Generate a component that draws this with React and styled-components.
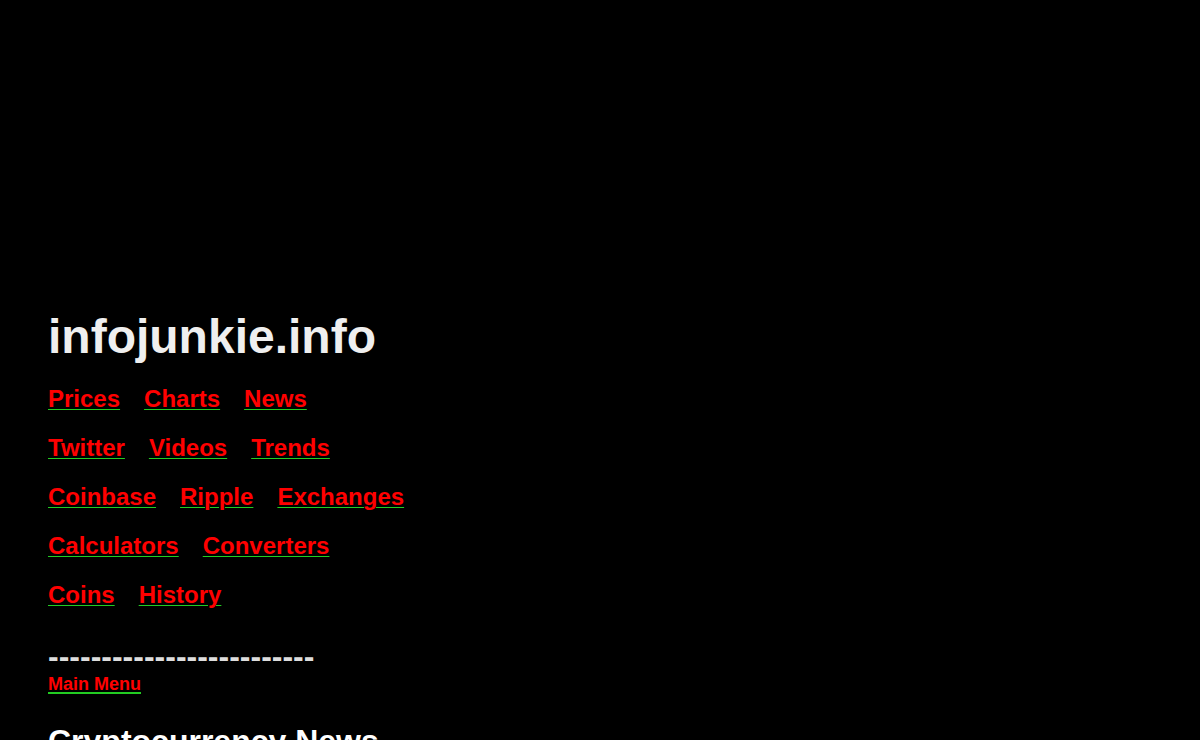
import React from "react"
import styled, { createGlobalStyle } from "styled-components"

const GlobalStyle = createGlobalStyle`
    html, body {
        margin: 0;
        padding: 0;
        background: #000;
    }
    body {
        font-family: "Liberation Sans", Arial, sans-serif;
        color: #eee;
    }
`

const PAGE = styled.div`
    padding: 309px 48px 0;
    min-height: 740px;
    box-sizing: border-box;
    background: #000;
`

const TITLE = styled.h1`
    margin: 0 0 21px;
    font-size: 48px;
    line-height: 55px;
    font-weight: bold;
    color: #efefef;
`

const NAV = styled.nav`
    display: flex;
    flex-direction: column;
    gap: 21px;
`

const ROW = styled.div`
    display: flex;
    gap: 24px;
    line-height: 28px;
`

const LINK = styled.a`
    font-size: ${(p) => p.size || 24}px;
    font-weight: bold;
    color: #f00;
    text-decoration: underline;
    text-decoration-color: #2c2;
    text-decoration-thickness: ${(p) => p.thick || 1}px;
    text-underline-offset: 2px;
    cursor: pointer;
`

const DASHES = styled.div`
    margin-top: 29px;
    font-size: 32px;
    line-height: 36px;
    font-weight: bold;
    color: #ddd;
`

const MENU = styled.div`
    line-height: 21px;
`

const HEADING = styled.h2`
    margin: 28px 0 0;
    font-size: 32px;
    line-height: 37px;
    font-weight: bold;
    color: #fff;
`

const rows = [
    ["Prices", "Charts", "News"],
    ["Twitter", "Videos", "Trends"],
    ["Coinbase", "Ripple", "Exchanges"],
    ["Calculators", "Converters"],
    ["Coins", "History"],
]

export default function App() {
    return (
        <PAGE>
            <GlobalStyle />
            <TITLE>infojunkie.info</TITLE>
            <NAV>
                {rows.map((row, i) => (
                    <ROW key={i}>
                        {row.map((name) => (
                            <LINK key={name} href="#">{name}</LINK>
                        ))}
                    </ROW>
                ))}
            </NAV>
            <DASHES>{"-".repeat(25)}</DASHES>
            <MENU>
                <LINK href="#" size={18} thick={2}>Main Menu</LINK>
            </MENU>
            <HEADING>Cryptocurrency News</HEADING>
        </PAGE>
    )
}
